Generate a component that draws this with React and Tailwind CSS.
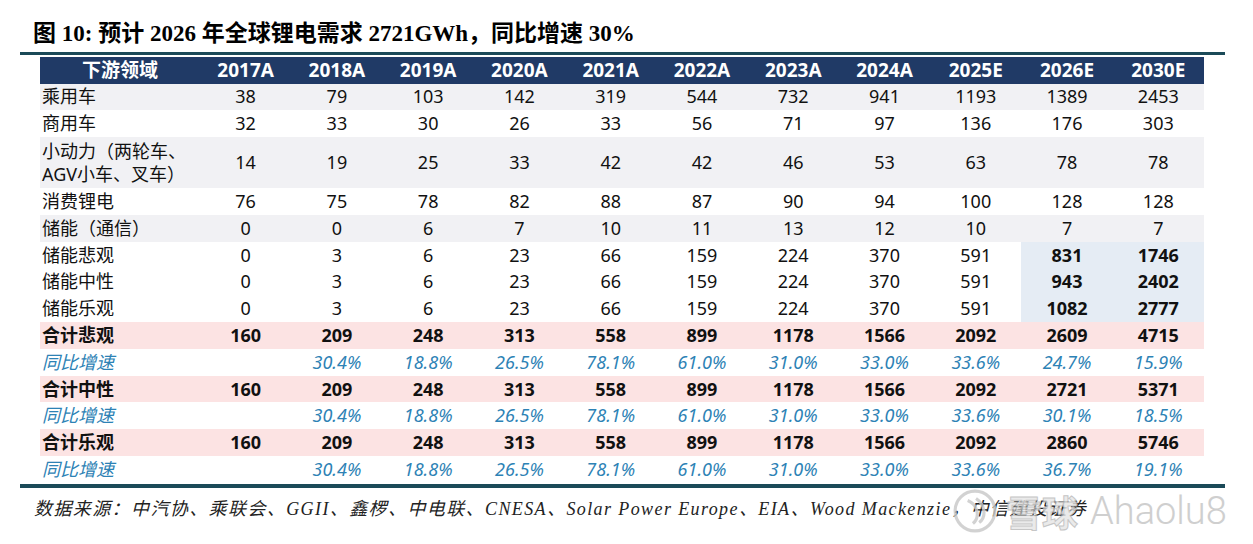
import React from 'react'

const years = ['2017A', '2018A', '2019A', '2020A', '2021A', '2022A', '2023A', '2024A', '2025E', '2026E', '2030E']

const rows = [
    { label: '乘用车', v: [38, 79, 103, 142, 319, 544, 732, 941, 1193, 1389, 2453], type: 'light' },
    { label: '商用车', v: [32, 33, 30, 26, 33, 56, 71, 97, 136, 176, 303] },
    { label: ['小动力（两轮车、', 'AGV小车、叉车）'], v: [14, 19, 25, 33, 42, 42, 46, 53, 63, 78, 78], type: 'light', tall: true },
    { label: '消费锂电', v: [76, 75, 78, 82, 88, 87, 90, 94, 100, 128, 128] },
    { label: '储能（通信）', v: [0, 0, 6, 7, 10, 11, 13, 12, 10, 7, 7], type: 'light' },
    { label: '储能悲观', v: [0, 3, 6, 23, 66, 159, 224, 370, 591, 831, 1746], type: 'shade' },
    { label: '储能中性', v: [0, 3, 6, 23, 66, 159, 224, 370, 591, 943, 2402], type: 'shade' },
    { label: '储能乐观', v: [0, 3, 6, 23, 66, 159, 224, 370, 591, 1082, 2777], type: 'shade' },
    { label: '合计悲观', v: [160, 209, 248, 313, 558, 899, 1178, 1566, 2092, 2609, 4715], type: 'total' },
    { label: '同比增速', v: ['', '30.4%', '18.8%', '26.5%', '78.1%', '61.0%', '31.0%', '33.0%', '33.6%', '24.7%', '15.9%'], type: 'growth' },
    { label: '合计中性', v: [160, 209, 248, 313, 558, 899, 1178, 1566, 2092, 2721, 5371], type: 'total' },
    { label: '同比增速', v: ['', '30.4%', '18.8%', '26.5%', '78.1%', '61.0%', '31.0%', '33.0%', '33.6%', '30.1%', '18.5%'], type: 'growth' },
    { label: '合计乐观', v: [160, 209, 248, 313, 558, 899, 1178, 1566, 2092, 2860, 5746], type: 'total' },
    { label: '同比增速', v: ['', '30.4%', '18.8%', '26.5%', '78.1%', '61.0%', '31.0%', '33.0%', '33.6%', '36.7%', '19.1%'], type: 'growth' },
]

function Row({ row }) {
    const rowBg = row.type === 'light' ? 'bg-[#f1f1f4]' : row.type === 'total' ? 'bg-[#fce3e3]' : 'bg-white'
    const text = row.type === 'total'
        ? 'font-bold text-[#111]'
        : row.type === 'growth'
            ? 'italic text-[#2d82b5]'
            : 'text-[#111]'
    return (
        <div className={`flex items-stretch ${rowBg} ${row.tall ? 'h-[51px]' : 'h-[26.8px]'}`}>
            <div className={`w-[160px] pl-[2px] flex flex-col justify-center leading-[23px] ${text}`}>
                {Array.isArray(row.label)
                    ? row.label.map((l) => <span key={l}>{l}</span>)
                    : <span>{row.label}</span>}
            </div>
            {row.v.map((val, i) => {
                const shaded = row.type === 'shade' && i >= 9
                return (
                    <div
                        key={i}
                        className={`w-[91.27px] flex items-center justify-center ${text} ${shaded ? 'bg-[#e5ecf4] font-bold' : ''}`}
                    >
                        {val}
                    </div>
                )
            })}
        </div>
    )
}

export default function App() {
    return (
        <div className="relative w-[1253px] h-[544px] bg-white overflow-hidden">
            <h1 className="pl-[33px] pt-[21px] h-[52px] text-[23px] leading-[26px] font-bold text-black font-['Liberation_Serif','Noto_Sans_CJK_SC',serif]">
                图 10: 预计 2026 年全球锂电需求 2721GWh，同比增速 30%
            </h1>

            <div className="ml-[20px] w-[1205px] h-[3px] bg-[#1b4a58]" />

            <div className="ml-[40px] mt-[2px] w-[1164px] text-[18px] font-['Noto_Sans','Noto_Sans_CJK_SC',sans-serif]">
                {/* header */}
                <div className="flex h-[26.5px] bg-[#203a66] text-white font-bold text-[19px]">
                    <div className="w-[160px] flex items-center justify-center">下游领域</div>
                    {years.map((y) => (
                        <div key={y} className="w-[91.27px] flex items-center justify-center">
                            {y}
                        </div>
                    ))}
                </div>

                {rows.map((row, i) => (
                    <Row key={i} row={row} />
                ))}
            </div>

            <div className="ml-[20px] mt-[1px] w-[1205px] h-[4px] bg-[#1b4a58]" />

            <p className="pl-[34px] pt-[8px] text-[18px] tracking-[1.4px] italic text-[#222] font-['Liberation_Serif','Noto_Sans_CJK_SC',serif]">
                数据来源：中汽协、乘联会、GGII、鑫椤、中电联、CNESA、Solar Power Europe、EIA、Wood Mackenzie，中信建投证券
            </p>

            {/* watermark */}
            <div className="absolute left-[952px] top-[488px] flex items-center gap-[8px] opacity-80 pointer-events-none">
                <svg width="46" height="46" viewBox="0 0 44 44" fill="none" stroke="#c8c8c8" strokeWidth="3">
                    <circle cx="22" cy="22" r="19" />
                    <path d="M15 12 C25 16 27 28 20 34" />
                    <path d="M23 10 C32 16 33 28 26 33" />
                </svg>
                <span className="text-[36px] leading-none font-bold text-[#e6e6e6] [-webkit-text-stroke:1px_#b8b8b8] font-['Noto_Sans_CJK_SC',sans-serif]">
                    雪球
                </span>
                <span className="ml-[4px] text-[38px] leading-none text-[#c4c4c4] font-light font-['Roboto',sans-serif]">
                    Ahaolu8
                </span>
            </div>
        </div>
    )
}
